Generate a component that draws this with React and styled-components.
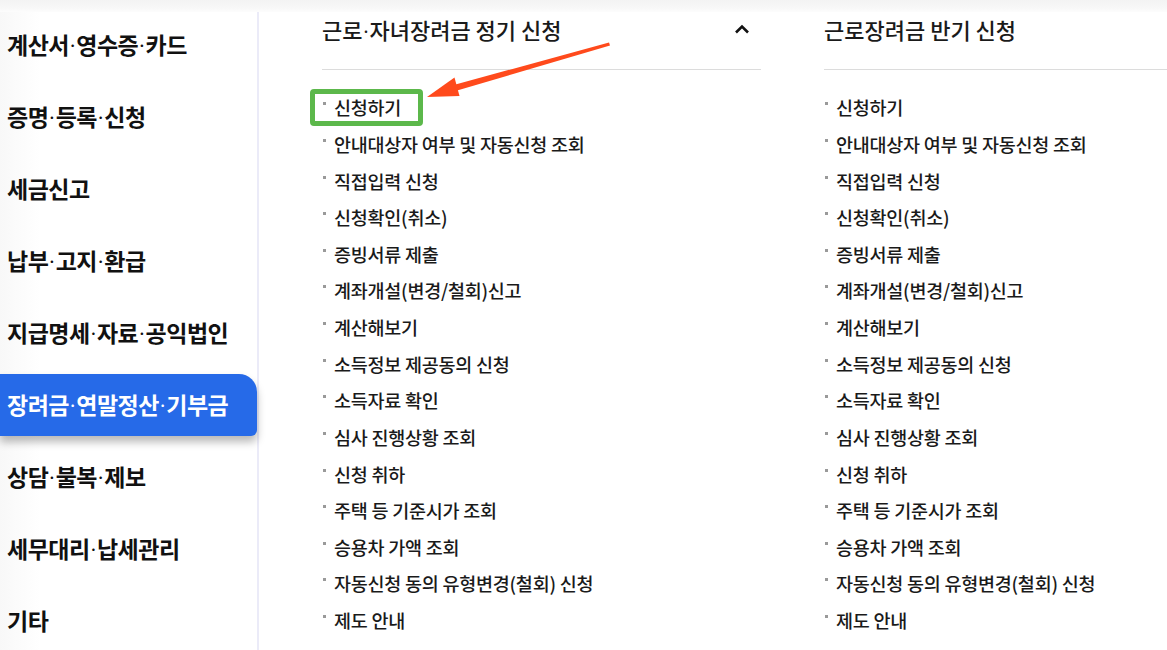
import React from 'react';
import styled, { createGlobalStyle } from 'styled-components';

const GlobalStyle = createGlobalStyle`
  html, body {
    margin: 0;
    padding: 0;
    background: #fff;
  }
  body {
    font-family: "Noto Sans CJK KR", "Noto Sans", sans-serif;
    color: #1a1a1a;
  }
`;

const menu = [
  '계산서·영수증·카드',
  '증명·등록·신청',
  '세금신고',
  '납부·고지·환급',
  '지급명세·자료·공익법인',
  '장려금·연말정산·기부금',
  '상담·불복·제보',
  '세무대리·납세관리',
  '기타',
];

const links = [
  '신청하기',
  '안내대상자 여부 및 자동신청 조회',
  '직접입력 신청',
  '신청확인(취소)',
  '증빙서류 제출',
  '계좌개설(변경/철회)신고',
  '계산해보기',
  '소득정보 제공동의 신청',
  '소득자료 확인',
  '심사 진행상황 조회',
  '신청 취하',
  '주택 등 기준시가 조회',
  '승용차 가액 조회',
  '자동신청 동의 유형변경(철회) 신청',
  '제도 안내',
];

const columns = [
  { title: '근로·자녀장려금 정기 신청', open: true, highlight: true },
  { title: '근로장려금 반기 신청' },
];

// the CJK middle dot is full width; set it smaller so it takes less room
const withDots = (text) =>
  text.split('·').flatMap((part, i) => (i === 0 ? [part] : [<Dot key={i}>·</Dot>, part]));

export default function App() {
  return (
    <Page>
      <GlobalStyle />
      <TopStrip />
      <Body>
        <Sidebar>
          {menu.map((m) => (
            <SideItem key={m} active={m === '장려금·연말정산·기부금'}>
              <span>{withDots(m)}</span>
            </SideItem>
          ))}
        </Sidebar>
        <Content>
          {columns.map((col) => (
            <Column key={col.title}>
              <ColumnHeader>
                <span>{withDots(col.title)}</span>
                {col.open && (
                  <svg width="16" height="10" viewBox="0 0 16 10">
                    <path d="M2 8.5 L8 2.5 L14 8.5" fill="none" stroke="#111" strokeWidth="2.6" />
                  </svg>
                )}
              </ColumnHeader>
              <LinkList>
                {links.map((l, i) => (
                  <LinkItem key={l}>
                    <Bullet />
                    {l}
                    {col.highlight && i === 0 && <Highlight />}
                  </LinkItem>
                ))}
              </LinkList>
            </Column>
          ))}
        </Content>
      </Body>
      <ArrowLayer width="1167" height="650" viewBox="0 0 1167 650">
        <polygon points="609,42.5 610,45.5 452,92 450,86" fill="#ff4a1c" />
        <polygon points="427,97 454.5,77.5 459.5,96" fill="#ff4a1c" />
      </ArrowLayer>
    </Page>
  );
}

const Page = styled.div`
  position: relative;
  width: 1167px;
  height: 650px;
  overflow: hidden;
  display: flex;
  flex-direction: column;
`;

const TopStrip = styled.div`
  height: 12px;
  flex: none;
  background: linear-gradient(#f3f3f3, #f8f8f8 70%, #fdfdfd);
`;

const Body = styled.div`
  flex: 1;
  display: flex;
`;

const Sidebar = styled.nav`
  width: 257px;
  flex: none;
  padding-top: 2px;
  border-right: 2px solid #ebebf8;
  background: linear-gradient(90deg, #f8f8f8, #ffffff 40px);
  display: flex;
  flex-direction: column;
  gap: 10px;
`;

const SideItem = styled.div`
  height: 62px;
  flex: none;
  display: flex;
  align-items: center;
  padding-left: 7px;
  font-size: 23px;
  font-weight: 700;
  letter-spacing: -0.5px;
  line-height: 1.2;
  white-space: nowrap;
  color: ${(p) => (p.active ? '#fff' : '#111')};
  background: ${(p) => (p.active ? '#266ae8' : 'transparent')};
  border-radius: 0 18px 6px 0;
  box-shadow: ${(p) => (p.active ? '0 6px 8px rgba(0, 0, 0, 0.28)' : 'none')};
`;

const Dot = styled.span`
  font-size: 0.52em;
  font-weight: 900;
  line-height: 1;
  vertical-align: 0.3em;
  letter-spacing: 0;
`;

const Content = styled.main`
  flex: 1;
  display: flex;
  gap: 63px;
  padding-left: 63px;
`;

const Column = styled.section`
  width: 439px;
  flex: none;
  &:last-child {
    width: auto;
    flex: 1;
  }
`;

const ColumnHeader = styled.div`
  display: flex;
  align-items: center;
  justify-content: space-between;
  padding: 2px 11px 25px 0;
  line-height: 30px;
  font-size: 22px;
  font-weight: 500;
  color: #1a1a1a;
  border-bottom: 1px solid #dcdcdc;
`;

const LinkList = styled.ul`
  list-style: none;
  margin: 0;
  padding: 19px 0 0;
`;

const LinkItem = styled.li`
  position: relative;
  height: 36.64px;
  display: flex;
  align-items: center;
  font-size: 18.5px;
  font-weight: 500;
  letter-spacing: -0.25px;
  color: #1a1a1a;
`;

const Bullet = styled.i`
  width: 3px;
  height: 3px;
  margin: 0 8px 7px 1px;
  background: #9a9a9a;
  flex: none;
`;

const Highlight = styled.span`
  position: absolute;
  left: -12px;
  top: 0;
  width: 113px;
  height: 37px;
  box-sizing: border-box;
  border: 5px solid #5cb84b;
  border-radius: 4px;
`;

const ArrowLayer = styled.svg`
  position: absolute;
  left: 0;
  top: 0;
  pointer-events: none;
`;
